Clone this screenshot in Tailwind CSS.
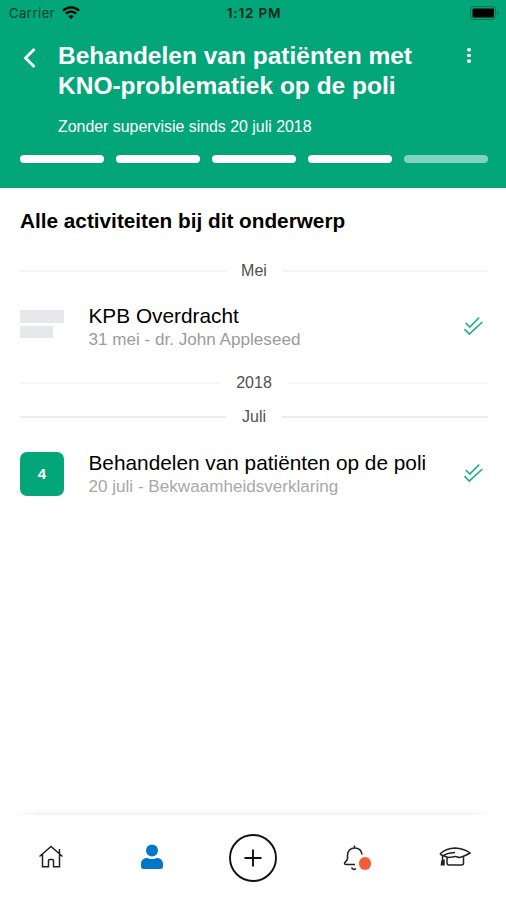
<!DOCTYPE html>
<html lang="nl">
<head>
    <meta charset="UTF-8">
    <meta name="viewport" content="width=device-width, initial-scale=1.0">
    <title>Alle activiteiten</title>
    <script src="https://cdn.jsdelivr.net/npm/@tailwindcss/browser@4"></script>
</head>
<body class="bg-white h-screen flex flex-col overflow-hidden font-['Liberation_Sans',Arial,sans-serif] text-black">

    <header class="bg-[#02a678] h-[188px] shrink-0 text-white">
        <!-- Status bar -->
        <div class="grid grid-cols-3 items-center h-[27px] pl-[9px] pr-[7px] font-[Inter,sans-serif] text-[13px] text-black/80">
            <div class="flex items-center gap-[7px]">
                <span class="tracking-[0.5px] text-black/70">Carrier</span>
                <svg class="w-[18px] h-[13px] mb-[2px]" viewBox="0 0 18 13" fill="none" stroke="#000" stroke-width="2.3">
                    <path d="M1 4.6C5.5.2 12.5.2 17 4.6M3.9 7.7c2.9-2.8 7.300-2.800 10.200 0"/>
                    <path d="M9 13L6.300 10.300c1.500-1.400 3.900-1.400 5.400 0z" fill="#000" stroke="none"/>
                </svg>
            </div>
            <div class="text-center font-semibold text-[13.5px] tracking-[0.8px]">1:12 PM</div>
            <svg class="justify-self-end w-[29px] h-[14px] mb-[2px]" viewBox="0 0 29 14">
                <rect x=".5" y=".5" width="25" height="13" rx="3.5" fill="none" stroke="#000" stroke-opacity=".3"/>
                <rect x="2.5" y="2.5" width="21.5" height="9" rx="1" fill="#000"/>
                <path d="M27 4.500c2 .8 2 4.200 0 5z" fill="#000" fill-opacity=".35"/>
            </svg>
        </div>

        <div class="flex pt-[14px] pl-[22px] pr-[33px]">
            <svg class="w-[16px] h-[22px] mt-[6px] mr-[20px] shrink-0" viewBox="0 0 16 22" fill="none" stroke="#fff" stroke-width="2.8">
                <path d="M12.500 2L3.500 11l9 9"/>
            </svg>
            <div class="flex-1 whitespace-nowrap">
                <h1 class="text-[24.5px] leading-[29.5px] font-bold">Behandelen van patiënten met<br>KNO-problematiek op de poli</h1>
                <p class="text-[15.9px] leading-5 mt-[17px]">Zonder supervisie sinds 20 juli 2018</p>
            </div>
            <svg class="w-[8px] h-[18px] mt-[6px] shrink-0" viewBox="0 0 8 18" fill="#fff">
                <rect x="2.2" y="1.2" width="3.6" height="3.2" rx=".8"/>
                <rect x="2.2" y="6.9" width="3.6" height="3.2" rx=".8"/>
                <rect x="2.2" y="12.6" width="3.6" height="3.2" rx=".8"/>
            </svg>
        </div>

        <!-- Progress -->
        <div class="grid grid-cols-5 gap-3 pl-[20px] pr-[18px] mt-[18px]">
            <div class="h-2 rounded-full bg-white"></div>
            <div class="h-2 rounded-full bg-white"></div>
            <div class="h-2 rounded-full bg-white"></div>
            <div class="h-2 rounded-full bg-white"></div>
            <div class="h-2 rounded-full bg-white/50"></div>
        </div>
    </header>

    <main class="flex-1 pl-[20px] pr-[18px]">
        <h2 class="h-[66px] flex items-center text-[20.75px] font-bold">Alle activiteiten bij dit onderwerp</h2>

        <div class="h-[34px] flex items-center gap-[15px] text-base text-[#505050]">
            <div class="flex-1 h-[2px] bg-[#f4f4f4]"></div>Mei<div class="flex-1 h-[2px] bg-[#f4f4f4]"></div>
        </div>

        <div class="h-[78px] flex items-center">
            <div class="w-[44px] mr-[24.5px] mb-[6px] flex flex-col gap-[3px]">
                <div class="h-[12.5px] bg-[#e6e8e9]"></div>
                <div class="h-[12.5px] w-[33px] bg-[#e6e8e9]"></div>
            </div>
            <div class="flex-1">
                <div class="text-[20.8px] leading-6">KPB Overdracht</div>
                <div class="text-[17.1px] leading-[23px] text-[#9b9b9b]">31 mei - dr. John Appleseed</div>
            </div>
            <svg class="w-[20px] h-[20px] mr-[5px] mb-[2px]" viewBox="0 0 20 20" fill="none" stroke="#22ad83" stroke-width="1.7">
                <path d="M2.800 7l4 4L16.200 1.500M1.500 13.200l4.800 4.800L19.300 6"/>
            </svg>
        </div>

        <div class="h-[34px] flex items-center gap-[16px] text-base text-[#505050]">
            <div class="flex-1 h-[2px] bg-[#f7f7f7]"></div>2018<div class="flex-1 h-[2px] bg-[#f7f7f7]"></div>
        </div>
        <div class="h-[34px] flex items-center gap-[16px] text-base text-[#505050]">
            <div class="flex-1 h-[2px] bg-[#ececec]"></div>Juli<div class="flex-1 h-[2px] bg-[#ececec]"></div>
        </div>

        <div class="h-[80px] flex items-center">
            <div class="size-[44px] mr-[24.5px] rounded-[7px] bg-[#02a678] text-white font-bold text-[15px] flex items-center justify-center">4</div>
            <div class="flex-1">
                <div class="text-[20.8px] leading-6">Behandelen van patiënten op de poli</div>
                <div class="text-[17.1px] leading-[23px] text-[#a8a8a8]">20 juli - Bekwaamheidsverklaring</div>
            </div>
            <svg class="w-[20px] h-[20px] mr-[5px] mb-[2px]" viewBox="0 0 20 20" fill="none" stroke="#22ad83" stroke-width="1.7">
                <path d="M2.800 7l4 4L16.200 1.500M1.500 13.200l4.800 4.800L19.300 6"/>
            </svg>
        </div>
    </main>

    <!-- Tab bar -->
    <div class="mx-[12px] h-[6px] shrink-0 bg-linear-to-b from-white to-[#f3f3f3] mask-x-from-95% mask-x-to-100%"></div>
    <nav class="h-[85px] shrink-0 grid grid-cols-5 justify-items-center items-center">
        <svg class="w-[26px] h-[24px] mb-[2px]" viewBox="0 0 26 24" fill="none" stroke="#222" stroke-width="1.5">
            <path d="M1.500 11.500L13 1.500l11.500 10M4.500 9.500v12.300h6v-6.300q0-1 1-1h3q1 0 1 1v6.300h6V9.500M21.500 8.500V4"/>
        </svg>
        <svg class="w-[22px] h-[26px] mb-[2px]" viewBox="0 0 22 26" fill="#0276c8">
            <circle cx="11" cy="6.500" r="6"/>
            <path d="M0 22v-2.500C0 16.500 2.500 14 6 14q5 1.800 10 0c3.500 0 6 2.500 6 5.500V22q0 3-2.500 3h-17Q0 25 0 22z"/>
        </svg>
        <svg class="w-[48px] h-[48px]" viewBox="0 0 48 48" fill="none" stroke="#111" stroke-width="1.9">
            <circle cx="24" cy="24" r="23"/>
            <path d="M15.500 24h17M24 15.500v17"/>
        </svg>
        <div class="relative w-[26px] h-[26px] ml-[2px]">
            <svg class="w-[26px] h-[26px]" viewBox="0 0 26 26" fill="none" stroke="#222" stroke-width="1.6">
                <path d="M12.500.5v2.500M20 9.500C19.500 5.500 16.500 3 12.500 3S5.500 6 5.500 10v3.500c0 2.500-3 3-3 5q0 1 1.500 1h9M9.500 22.500c.8 2 3 2.400 4.500 1"/>
            </svg>
            <div class="absolute left-[16.5px] top-[12.5px] size-[12.5px] rounded-full bg-[#f45d37]"></div>
        </div>
        <!-- Graduation cap -->
        <svg class="w-[32px] h-[22px] mb-[2px]" viewBox="0 0 32 22" fill="none" stroke="#222" stroke-width="1.5">
            <path d="M1.500 7.500C5 4.500 11 2.200 16 2c5 .2 11 2 15 5-3.500 2.200-6.500 3.500-9.500 4.300-1 .3-2 .2-3-.3-1.600-.8-3.300-.8-5 0L9 11.500 2.500 9q-1.500-.8-1-1.500zM16 6.500C10 7 5 8.500 3.500 10.500v9M2.300 19.500l.7-5M5 19.500v-6M8 11.500v5.500q0 2 2 2h12.500q2 0 2-2v-6.500"/>
        </svg>
    </nav>

</body>
</html>
